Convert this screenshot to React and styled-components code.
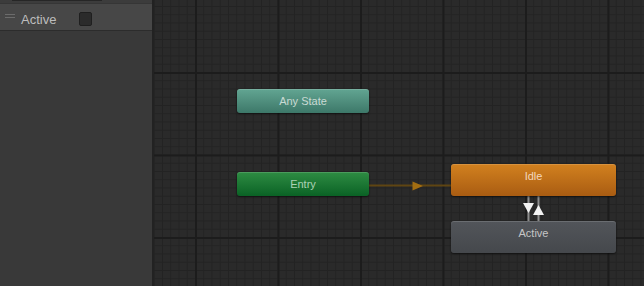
import styled, { createGlobalStyle } from "styled-components";

const GlobalStyle = createGlobalStyle`
  html, body, #root {
    margin: 0;
    padding: 0;
    height: 100%;
  }
  body {
    background: #2a2a2a;
    font-family: "Liberation Sans", Arial, sans-serif;
    overflow: hidden;
  }
`;

const Window = styled.div`
  display: flex;
  height: 286px;
  width: 644px;
`;

const Sidebar = styled.div`
  width: 152px;
  flex-shrink: 0;
  background: #393939;
  border-right: 2px solid #222222;
  display: flex;
  flex-direction: column;
`;

const TopStrip = styled.div`
  height: 4px;
  background: #3c3c3c;
  border-bottom: 1px solid #363636;
  box-sizing: border-box;
`;

const FieldStub = styled.div`
  margin-left: 12px;
  width: 90px;
  height: 1px;
  background: #262626;
`;

const ParamRow = styled.div`
  height: 27px;
  box-sizing: border-box;
  padding: 4px 0 0 5px;
  background: #474747;
  border-bottom: 1px solid #2c2c2c;
  display: flex;
  align-items: center;
`;

const Handle = styled.div`
  align-self: flex-start;
  margin-top: 6px;
  width: 10px;
  display: flex;
  flex-direction: column;
  gap: 2px;

  span {
    display: block;
    height: 1px;
    background: #6c6c6c;
  }
`;

const ParamName = styled.span`
  margin-left: 6px;
  width: 58px;
  font-size: 13px;
  color: #bdbdbd;
`;

const Checkbox = styled.div`
  width: 13px;
  height: 14px;
  box-sizing: border-box;
  background: #2b2b2b;
  border: 1px solid #1f1f1f;
  border-radius: 2px;
`;

const Canvas = styled.div`
  position: relative;
  flex: 1;
  background-color: #2a2a2a;
  background-image:
    linear-gradient(to right, #1c1c1c 2px, transparent 2px),
    linear-gradient(to bottom, #1c1c1c 2px, transparent 2px),
    linear-gradient(to right, #232323 1px, transparent 1px),
    linear-gradient(to bottom, #232323 1px, transparent 1px);
  background-size: 82.5px 82.5px, 82.5px 82.5px, 8.25px 8.25px, 8.25px 8.25px;
  background-position: 41px 72px;
  overflow: hidden;
`;

const Links = styled.svg`
  position: absolute;
  inset: 0;
  width: 100%;
  height: 100%;
  pointer-events: none;
`;

const palette = {
  any: { top: "#62a592", bottom: "#3d7869", text: "#c9dad4" },
  entry: { top: "#2e8c43", bottom: "#0a6225", text: "#acd2b5" },
  default: { top: "#d2811f", bottom: "#a95c12", text: "#f4d8bc" },
  state: { top: "#52555a", bottom: "#45484c", text: "#c6c6c6" },
};

const Node = styled.div`
  position: absolute;
  box-sizing: border-box;
  display: flex;
  align-items: center;
  justify-content: center;
  padding-bottom: ${(p) => (p.$tall ? "8px" : "0")};
  border-radius: 3px;
  font-size: 11px;
  color: ${(p) => palette[p.$kind].text};
  background: linear-gradient(
    to bottom,
    ${(p) => palette[p.$kind].top},
    ${(p) => palette[p.$kind].bottom}
  );
  box-shadow: inset 0 1px 0 rgba(255, 255, 255, 0.14),
    0 1px 2px rgba(0, 0, 0, 0.55);
`;

const nodes = [
  { label: "Any State", kind: "any", x: 83, y: 89, w: 132, h: 24 },
  { label: "Entry", kind: "entry", x: 83, y: 172, w: 132, h: 24 },
  { label: "Idle", kind: "default", x: 297, y: 164, w: 165, h: 32, tall: true },
  { label: "Active", kind: "state", x: 297, y: 221, w: 165, h: 32, tall: true },
];

function Transitions() {
  return (
    <Links>
      <line x1="215" y1="185.5" x2="297" y2="185.5" stroke="#5f4512" strokeWidth="2" />
      <polygon points="258.5,181.5 269,186 258.5,190.5" fill="#a36e12" />

      <line x1="374.5" y1="196" x2="374.5" y2="221" stroke="#8e8e8e" strokeWidth="2" />
      <line x1="384.5" y1="196" x2="384.5" y2="221" stroke="#8e8e8e" strokeWidth="2" />
      <polygon points="369,203 380,203 374.5,213" fill="#f2f2f2" />
      <polygon points="379,215 390,215 384.5,205" fill="#f2f2f2" />
    </Links>
  );
}

export default function App() {
  return (
    <>
      <GlobalStyle />
      <Window>
        <Sidebar>
          <TopStrip>
            <FieldStub />
          </TopStrip>
          <ParamRow>
            <Handle>
              <span />
              <span />
            </Handle>
            <ParamName>Active</ParamName>
            <Checkbox />
          </ParamRow>
        </Sidebar>
        <Canvas>
          <Transitions />
          {nodes.map((n) => (
            <Node
              key={n.label}
              $kind={n.kind}
              $tall={n.tall}
              style={{ left: n.x, top: n.y, width: n.w, height: n.h }}
            >
              {n.label}
            </Node>
          ))}
        </Canvas>
      </Window>
    </>
  );
}
